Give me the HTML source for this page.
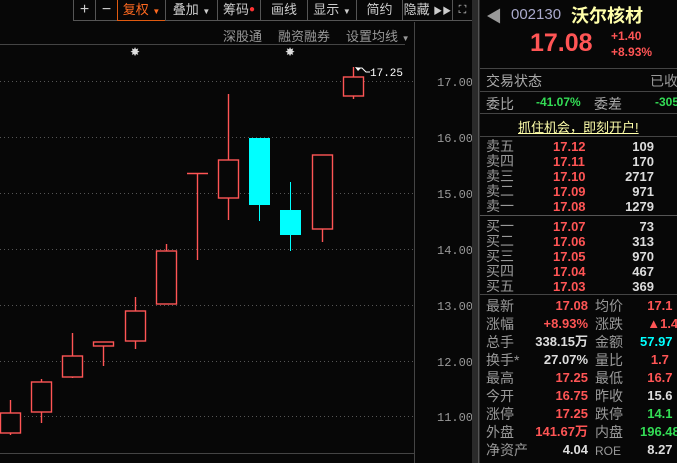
<!DOCTYPE html>
<html><head><meta charset="utf-8"><style>
*{margin:0;padding:0;box-sizing:border-box}
body{width:677px;height:463px;background:#070707;overflow:hidden;position:relative;font-family:"Liberation Sans","Noto Sans CJK SC",sans-serif;color:#bbb}
.a{position:absolute;white-space:nowrap}
.btn{position:absolute;top:0;height:21px;border:1px solid #555;border-top:none;color:#ccc;font-size:13px;line-height:20px;text-align:center}
.r{color:#ff5555}.g{color:#33dd55}.w{color:#ddd}.c{color:#00ffff}.gy{color:#999}
.lb{position:absolute;left:486px;font-size:14px;color:#aaa}
.ob{position:absolute;font-size:14px;line-height:15px}
.n{font-weight:bold}
</style></head><body>
<div class="btn" style="left:73px;width:23px;font-size:16px">+</div>
<div class="btn" style="left:95px;width:23px;font-size:16px">−</div>
<div class="btn" style="left:117px;width:49px;border-color:#e05a10;border-top:none;color:#ff6a20">复权 <span style="font-size:8px">▼</span></div>
<div class="btn" style="left:165px;width:53px">叠加 <span style="font-size:8px">▼</span></div>
<div class="btn" style="left:217px;width:44px">筹码<span style="color:#f33;font-size:10px;vertical-align:top">●</span></div>
<div class="btn" style="left:260px;width:48px">画线</div>
<div class="btn" style="left:307px;width:50px">显示 <span style="font-size:8px">▼</span></div>
<div class="btn" style="left:356px;width:47px">简约</div>
<div class="btn" style="left:402px;width:51px">隐藏 <span style="font-size:9px">▶▶</span></div>
<div class="btn" style="left:452px;width:21px;font-size:11px">⛶</div>
<div class="a gy" style="left:223px;top:26px;font-size:13px">深股通</div>
<div class="a gy" style="left:278px;top:26px;font-size:13px">融资融券</div>
<div class="a gy" style="left:346px;top:26px;font-size:13px">设置均线 <span style="font-size:8px">▼</span></div>
<div class="a" style="left:0;top:44px;width:405px;height:1px;background:#444"></div>
<div class="a" style="left:414px;top:22px;width:1px;height:441px;background:#444"></div>
<div class="a" style="left:0;top:453px;width:414px;height:1px;background:#444"></div>
<div class="a" style="left:472px;top:0;width:8px;height:463px;background:#2a2a2a"></div>
<div class="a" style="left:478px;top:0;width:1px;height:463px;background:#555"></div>
<svg class="a" style="left:0;top:0" width="472" height="463">
<g stroke="#555" stroke-dasharray="1,3">
<line x1="0" y1="81.5" x2="414" y2="81.5"/><line x1="0" y1="137.5" x2="414" y2="137.5"/><line x1="0" y1="193.5" x2="414" y2="193.5"/><line x1="0" y1="249.5" x2="414" y2="249.5"/><line x1="0" y1="305.5" x2="414" y2="305.5"/><line x1="0" y1="361.5" x2="414" y2="361.5"/><line x1="0" y1="416.5" x2="414" y2="416.5"/>
</g>
<g fill="#999" font-family="Liberation Mono,monospace" font-size="12">
<text x="437" y="86">17.00</text><text x="437" y="142">16.00</text><text x="437" y="198">15.00</text><text x="437" y="254">14.00</text><text x="437" y="310">13.00</text><text x="437" y="366">12.00</text><text x="437" y="421">11.00</text>
</g>
<g stroke="#ff5555" stroke-width="1.4" fill="none">
<line x1="10.5" y1="400" x2="10.5" y2="435"/><rect x="0.5" y="413" width="20" height="20" fill="#070707"/>
<line x1="41.5" y1="379" x2="41.5" y2="423"/><rect x="31.5" y="382" width="20" height="30" fill="#070707"/>
<line x1="72.5" y1="333" x2="72.5" y2="378"/><rect x="62.5" y="356" width="20" height="21" fill="#070707"/>
<line x1="103.5" y1="346" x2="103.5" y2="366"/><rect x="93.5" y="342" width="20" height="4" fill="#070707"/>
<line x1="135.5" y1="297" x2="135.5" y2="349"/><rect x="125.5" y="311" width="20" height="30" fill="#070707"/>
<line x1="166.5" y1="244" x2="166.5" y2="304"/><rect x="156.5" y="251" width="20" height="53" fill="#070707"/>
<line x1="197.5" y1="173" x2="197.5" y2="260"/><line x1="187" y1="173.5" x2="208" y2="173.5"/>
<line x1="228.5" y1="94" x2="228.5" y2="220"/><rect x="218.5" y="160" width="20" height="38" fill="#070707"/>
<line x1="322.5" y1="155" x2="322.5" y2="242"/><rect x="312.5" y="155" width="20" height="74" fill="#070707"/>
<line x1="353.5" y1="67" x2="353.5" y2="99"/><rect x="343.5" y="77" width="20" height="19" fill="#070707"/>
</g>
<g fill="#00ffff" stroke="#00ffff">
<line x1="259.5" y1="205" x2="259.5" y2="221"/><rect x="249" y="138" width="21" height="67" stroke="none"/>
<line x1="290.5" y1="182" x2="290.5" y2="251"/><rect x="280" y="210" width="21" height="25" stroke="none"/>
</g>
<path d="M356 68 L362 68 L366 72 L370 72" stroke="#fff" fill="none"/><path d="M355 67 l6 1 l-3 3z" fill="#fff"/>
<text x="370" y="76" fill="#fff" font-size="11" font-family="Liberation Mono,monospace">17.25</text>
<text x="130" y="56" fill="#ddd" font-size="12">✸</text><text x="285" y="56" fill="#ddd" font-size="12">✸</text>
</svg>
<div class="a gy" style="left:486px;top:3px;font-size:16px">◀</div>
<div class="a" style="left:511px;top:6px;font-size:15px;color:#aac">002130</div>
<div class="a" style="left:571px;top:2px;font-size:18px;color:#ffffaa;font-weight:bold">沃尔核材</div>
<div class="a r n" style="left:530px;top:29px;font-size:25px">17.08</div>
<div class="a r n" style="left:611px;top:29px;font-size:12px">+1.40</div>
<div class="a r n" style="left:611px;top:45px;font-size:12px">+8.93%</div>
<div class="a" style="left:480px;top:68px;width:197px;height:1px;background:#444"></div>
<div class="lb" style="top:71px">交易状态</div><div class="a gy" style="left:650px;top:71px;font-size:14px">已收</div>
<div class="a" style="left:480px;top:91px;width:197px;height:1px;background:#444"></div>
<div class="lb" style="top:94px">委比</div><div class="a g n" style="left:536px;top:95px;font-size:12px">-41.07%</div>
<div class="lb" style="left:594px;top:94px">委差</div><div class="a g n" style="left:655px;top:95px;font-size:12px">-305</div>
<div class="a" style="left:480px;top:113px;width:197px;height:1px;background:#444"></div>
<div class="a" style="left:518px;top:117px;font-size:13px;color:#ffffaa;text-decoration:underline">抓住机会，即刻开户!</div>
<div class="a" style="left:480px;top:136px;width:197px;height:1px;background:#444"></div>
<div class="ob gy" style="left:486px;top:139px">卖五<br>卖四<br>卖三<br>卖二<br>卖一</div>
<div class="ob r n" style="left:553px;top:139px;font-size:13px">17.12<br>17.11<br>17.10<br>17.09<br>17.08</div>
<div class="ob w n" style="left:600px;top:139px;width:54px;text-align:right;font-size:13px">109<br>170<br>2717<br>971<br>1279</div>
<div class="a" style="left:480px;top:215px;width:197px;height:1px;background:#555"></div>
<div class="ob gy" style="left:486px;top:219px">买一<br>买二<br>买三<br>买四<br>买五</div>
<div class="ob r n" style="left:553px;top:219px;font-size:13px">17.07<br>17.06<br>17.05<br>17.04<br>17.03</div>
<div class="ob w n" style="left:600px;top:219px;width:54px;text-align:right;font-size:13px">73<br>313<br>970<br>467<br>369</div>
<div class="a" style="left:480px;top:294px;width:197px;height:1px;background:#444"></div>
<div class="ob gy" style="left:486px;top:297px;line-height:18px">最新<br>涨幅<br>总手<br>换手*<br>最高<br>今开<br>涨停<br>外盘<br>净资产</div>
<div class="ob n" style="left:530px;top:297px;width:58px;text-align:right;line-height:18px;font-size:13px"><span class="r">17.08</span><br><span class="r">+8.93%</span><br><span class="w">338.15万</span><br><span class="w">27.07%</span><br><span class="r">17.25</span><br><span class="r">16.75</span><br><span class="r">17.25</span><br><span class="r">141.67万</span><br><span class="w">4.04</span></div>
<div class="ob gy" style="left:595px;top:297px;line-height:18px">均价<br>涨跌<br>金额<br>量比<br>最低<br>昨收<br>跌停<br>内盘<br><span style="font-size:12px">ROE</span></div>
<div class="ob n" style="left:640px;top:297px;line-height:18px;font-size:13px"><span class="r">&nbsp;&nbsp;17.1</span><br><span class="r">&nbsp;&nbsp;▲1.4</span><br><span class="c">57.97</span><br><span class="r">&nbsp;&nbsp;&nbsp;1.7</span><br><span class="r">&nbsp;&nbsp;16.7</span><br><span class="w">&nbsp;&nbsp;15.6</span><br><span class="g">&nbsp;&nbsp;14.1</span><br><span class="g">196.48</span><br><span class="w">&nbsp;&nbsp;8.27</span></div>
</body></html>
